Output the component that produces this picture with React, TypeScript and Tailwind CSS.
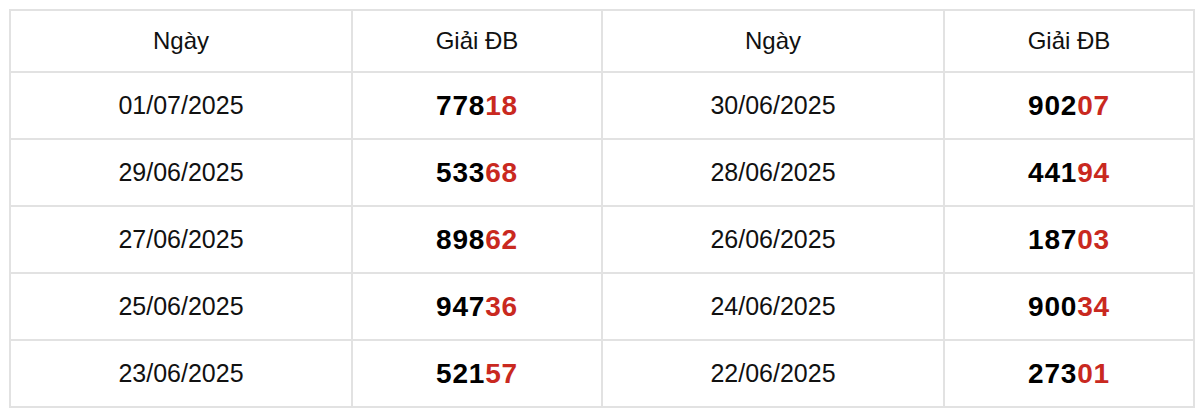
const rows: [string, string, string, string][] = [
  ['01/07/2025', '77818', '30/06/2025', '90207'],
  ['29/06/2025', '53368', '28/06/2025', '44194'],
  ['27/06/2025', '89862', '26/06/2025', '18703'],
  ['25/06/2025', '94736', '24/06/2025', '90034'],
  ['23/06/2025', '52157', '22/06/2025', '27301'],
];

// last two digits are highlighted in red
function Prize({ value }: { value: string }) {
  return (
    <span className="text-[28px] font-bold tracking-[0.8px] text-black">
      {value.slice(0, 3)}
      <span className="text-[#c9291f]">{value.slice(3)}</span>
    </span>
  );
}

export default function App() {
  return (
    <div
      className="bg-white p-[9px]"
      style={{ fontFamily: '"Liberation Sans", Arial, sans-serif' }}
    >
      <table className="w-[1184px] table-fixed border-collapse border-2 border-[#e2e2e2] text-center text-[#111]">
        <colgroup>
          <col className="w-[342px]" />
          <col className="w-[250px]" />
          <col className="w-[342px]" />
          <col className="w-[250px]" />
        </colgroup>
        <thead>
          <tr className="h-[62px]">
            <th className="border-2 border-[#e2e2e2] text-[24px] font-medium">Ngày</th>
            <th className="border-2 border-[#e2e2e2] text-[24px] font-medium">Giải ĐB</th>
            <th className="border-2 border-[#e2e2e2] text-[24px] font-medium">Ngày</th>
            <th className="border-2 border-[#e2e2e2] text-[24px] font-medium">Giải ĐB</th>
          </tr>
        </thead>
        <tbody>
          {rows.map((row, i) => (
            <tr key={i} className="h-[67px]">
              <td className="border-2 border-[#e2e2e2] text-[25px]">{row[0]}</td>
              <td className="border-2 border-[#e2e2e2]">
                <Prize value={row[1]} />
              </td>
              <td className="border-2 border-[#e2e2e2] text-[25px]">{row[2]}</td>
              <td className="border-2 border-[#e2e2e2]">
                <Prize value={row[3]} />
              </td>
            </tr>
          ))}
        </tbody>
      </table>
    </div>
  );
}
